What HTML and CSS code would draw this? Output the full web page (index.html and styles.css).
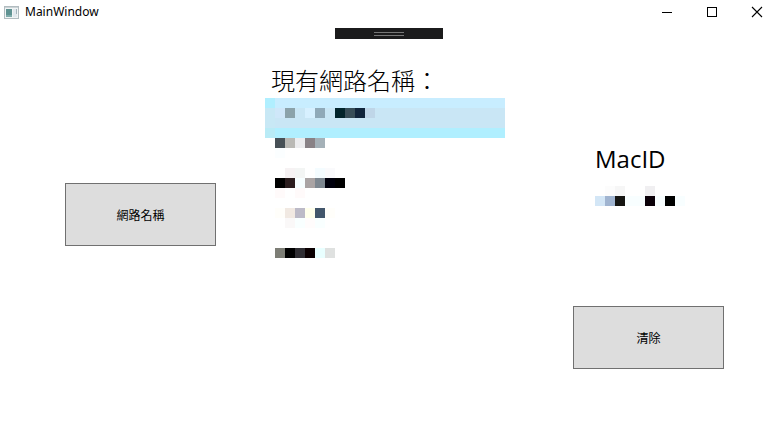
FILE: index.html
```html
<!DOCTYPE html>
<html lang="zh-Hant">
<head>
<meta charset="utf-8">
<title>MainWindow</title>
<link rel="stylesheet" href="styles.css">
</head>
<body>
<div class="window">
  <header class="titlebar">
    <svg class="app-icon" width="15" height="13" viewBox="0 0 15 13" aria-hidden="true">
      <rect x=".5" y=".5" width="14" height="12" fill="#f1f4f5" stroke="#b2bcc0"/>
      <path d="M1 1.5h13" stroke="#cbd3d6"/>
      <rect x="2" y="3" width="6" height="8" fill="#5f9292"/>
      <path d="M2 9h6v2H2z" fill="#7eabaa"/>
      <rect x="9" y="3" width="4" height="8" fill="#e1e8ed"/>
      <path d="M12.500 3v5" stroke="#a4b4bc"/>
    </svg>
    <span class="title">MainWindow</span>
    <div class="controls">
      <button class="control" aria-label="最小化"><svg width="10" height="10" viewBox="0 0 10 10"><path d="M0 5.500h10" stroke="#000"/></svg></button>
      <button class="control" aria-label="最大化"><svg width="10" height="10" viewBox="0 0 10 10"><rect x=".5" y=".5" width="9" height="9" fill="none" stroke="#000"/></svg></button>
      <button class="control" aria-label="關閉"><svg width="10" height="10" viewBox="0 0 10 10"><path d="M0 0l10 10M10 0L0 10" stroke="#000" stroke-width="1.100"/></svg></button>
    </div>
  </header>
  <div class="debug-bar"><span class="grip"></span></div>
  <main class="content">
    <section class="source">
      <button class="action">網路名稱</button>
    </section>
    <section class="networks">
      <h1 class="heading">現有網路名稱：</h1>
      <ul class="list">
        <li class="item selected">
          <svg class="mosaic" width="110" height="40" viewBox="0 0 110 40" shape-rendering="crispEdges" aria-hidden="true">
            <path d="M0 0h10v10H0z" fill="#b0efff"/><path d="M0 10h10v20H0z" fill="#c8e8f5"/><path d="M0 30h10v10H0z" fill="#b9ebf6"/>
            <path d="M10 10h10v10H10z" fill="#cfe7f9"/><path d="M20 10h10v10H20z" fill="#8ba2aa"/><path d="M40 10h10v10H40z" fill="#d7f0ff"/><path d="M50 10h10v10H50z" fill="#90a9b8"/><path d="M70 10h10v10H70z" fill="#02242b"/><path d="M80 10h10v10H80z" fill="#384e58"/><path d="M90 10h10v10H90z" fill="#11253b"/><path d="M100 10h10v10H100z" fill="#bfd6e8"/>
          </svg>
        </li>
        <li class="item">
          <svg class="mosaic" width="110" height="30" viewBox="0 0 110 30" shape-rendering="crispEdges" aria-hidden="true">
            <path d="M10 0h10v10H10z" fill="#475056"/><path d="M20 0h10v10H20z" fill="#bab9b5"/><path d="M30 0h10v10H30z" fill="#ececee"/><path d="M40 0h10v10H40z" fill="#898286"/><path d="M50 0h10v10H50z" fill="#a5b1b8"/><path d="M10 10h10v10H10z" fill="#fbfeff"/>
          </svg>
        </li>
        <li class="item">
          <svg class="mosaic" width="110" height="40" viewBox="0 0 110 40" shape-rendering="crispEdges" aria-hidden="true">
            <path d="M20 0h10v10H20z" fill="#f6f2f3"/><path d="M30 0h10v10H30z" fill="#f3f5f4"/><path d="M50 0h10v10H50z" fill="#f4fcff"/><path d="M60 0h10v10H60z" fill="#fafafc"/>
            <path d="M10 10h10v10H10z" fill="#000"/><path d="M20 10h10v10H20z" fill="#2b1d1e"/><path d="M30 10h10v10H30z" fill="#f7feff"/><path d="M40 10h10v10H40z" fill="#aaa4a4"/><path d="M50 10h10v10H50z" fill="#7d8790"/><path d="M60 10h10v10H60z" fill="#00000c"/><path d="M70 10h10v10H70z" fill="#000"/><path d="M10 20h10v10H10zM30 20h10v10H30z" fill="#fffafa"/>
          </svg>
        </li>
        <li class="item">
          <svg class="mosaic" width="110" height="40" viewBox="0 0 110 40" shape-rendering="crispEdges" aria-hidden="true">
            <path d="M10 0h10v10H10zM60 0h10v10H60z" fill="#fffefa"/><path d="M20 0h10v10H20z" fill="#f1e9e2"/><path d="M30 0h10v10H30z" fill="#bcbac7"/><path d="M40 0h10v10H40z" fill="#ffffec"/><path d="M50 0h10v10H50z" fill="#42566b"/>
            <path d="M20 10h10v10H20z" fill="#faf8f8"/><path d="M30 10h10v10H30zM50 10h10v10H50z" fill="#f9ffff"/><path d="M40 10h10v10H40z" fill="#fffcfc"/>
          </svg>
        </li>
        <li class="item">
          <svg class="mosaic" width="110" height="10" viewBox="0 0 110 10" shape-rendering="crispEdges" aria-hidden="true">
            <path d="M10 0h10v10H10z" fill="#7d7e76"/><path d="M20 0h10v10H20z" fill="#000"/><path d="M30 0h10v10H30z" fill="#302e33"/><path d="M40 0h10v10H40z" fill="#0b0001"/><path d="M50 0h10v10H50z" fill="#e9ffff"/><path d="M60 0h10v10H60z" fill="#dfe1e0"/>
          </svg>
        </li>
      </ul>
    </section>
    <section class="details">
      <div class="mac">
        <h2 class="heading">MacID</h2>
        <svg class="mosaic mac-value" width="90" height="20" viewBox="0 0 90 20" shape-rendering="crispEdges" aria-hidden="true">
          <path d="M10 0h10v10H10z" fill="#fcfcfc"/><path d="M20 0h10v10H20z" fill="#f6f6f6"/><path d="M50 0h10v10H50z" fill="#f0eff1"/>
          <path d="M0 10h10v10H0z" fill="#d3e6f6"/><path d="M10 10h10v10H10z" fill="#a0b4d0"/><path d="M20 10h10v10H20z" fill="#151512"/><path d="M30 10h20v10H30zM60 10h10v10H60zM80 10h10v10H80z" fill="#f8feff"/><path d="M50 10h10v10H50z" fill="#0b0008"/><path d="M70 10h10v10H70z" fill="#000"/>
        </svg>
      </div>
      <button class="action clear">清除</button>
    </section>
  </main>
</div>
</body>
</html>
```
FILE: styles.css
```css
* { box-sizing: border-box; }

body {
  margin: 0;
  background: #fff;
  color: #000;
  font-family: "Open Sans", "Noto Sans CJK TC", sans-serif;
  font-size: 12px;
}

.window {
  position: relative;
  min-height: 100vh;
  display: flex;
  flex-direction: column;
}

.titlebar {
  display: flex;
  align-items: center;
  height: 24px;
  padding-left: 4px;
}

.title {
  margin-left: 6px;
  font-family: "Noto Sans", sans-serif;
  line-height: 24px;
}

.controls { display: flex; margin-left: auto; }

.control {
  display: flex;
  align-items: center;
  justify-content: center;
  width: 45px;
  height: 24px;
  padding: 0 0 0 4px;
  border: 0;
  background: transparent;
}

.control svg { overflow: visible; }

.debug-bar {
  position: absolute;
  top: 28px;
  left: 50%;
  width: 108px;
  height: 11px;
  transform: translateX(-50%);
  display: flex;
  align-items: center;
  justify-content: center;
  background: #1b1b1c;
}

.grip {
  width: 30px;
  height: 4px;
  border: solid #777;
  border-width: 1px 0;
}

.content {
  flex: 1;
  display: grid;
  grid-template-columns: 265fr 240fr 272fr;
}

.source {
  display: flex;
  justify-content: flex-end;
  align-items: flex-start;
  padding: 159px 49px 0 0;
}

.networks { padding-top: 40px; }

.heading {
  margin: 0;
  font-size: 24px;
  line-height: 34px;
  font-weight: 400;
}

.networks .heading { padding-left: 6px; font-weight: 300; }

.list { margin: 0; padding: 0; list-style: none; }

.mosaic { display: block; }

.selected {
  background: linear-gradient(#c8edff 25%, #c9e6f5 25%, #c9e6f5 75%, #b0efff 75%);
}

.action {
  width: 151px;
  height: 63px;
  border: 1px solid #707070;
  background: #ddd;
  color: #000;
  font: inherit;
}

.details {
  display: flex;
  flex-direction: column;
  padding-top: 118px;
}

.mac { padding-left: 90px; }

.mac-value { margin-top: 10px; }

.clear { margin: 100px 53px 0 0; align-self: flex-end; }
```
